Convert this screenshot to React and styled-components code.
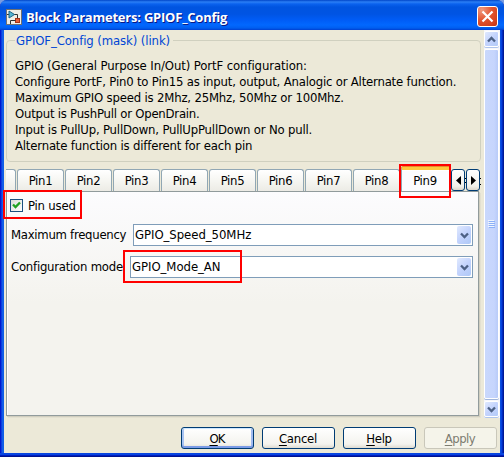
import React from 'react';
import styled, { createGlobalStyle } from 'styled-components';

const Global = createGlobalStyle`
  *, *::before, *::after { box-sizing: border-box; }
  body { margin: 0; background: #7a9ce0; overflow: hidden; }
`;

const Window = styled.div`
  position: relative;
  display: flex;
  flex-direction: column;
  width: 504px;
  height: 457px;
  padding: 0 4px 4px;
  border-radius: 7px 7px 0 0;
  background: linear-gradient(to right, #0019cf 0, #0019cf 1px, #0831d9 1px, #166aee 3px, #0855dd 4px, #0855dd 500px, #0a4be6 501px, #0037d8 502px, #001ea0 503px, #00138c 504px);
  font: 13px/16px 'DejaVu Sans Condensed', 'DejaVu Sans', sans-serif;
  color: #000;
  overflow: hidden;
  box-shadow: inset 0 -1px #00138c, inset 0 -2px #001dc0, inset 0 -4px #0845e0;
`;

const TitleBar = styled.header`
  display: flex;
  align-items: center;
  flex: none;
  height: 30px;
  margin: 0 -4px;
  padding: 3px 6px 0;
  background: linear-gradient(to bottom, #0045c8 0, #2b7ff5 2px, #0a62ee 4px, #0054e0 7px, #0054e3 14px, #005cf6 20px, #0268fe 25px, #005ef0 28px, #003fd0 30px);
`;

const Title = styled.h1`
  flex: 1;
  margin: 0 0 0 4px;
  font: bold 13px/18px 'Open Sans', sans-serif;
  letter-spacing: -0.22px;
  color: #fff;
  text-shadow: 1px 1px #0a1883;
`;

const CloseButton = styled.button`
  display: flex;
  align-items: center;
  justify-content: center;
  width: 21px;
  height: 21px;
  margin: 0;
  padding: 0;
  border: 1px solid #fff;
  border-radius: 3px;
  background: radial-gradient(circle at 20% 15%, #f09a80, #e25530 45%, #d3401c 80%, #b93210);
`;

const Body = styled.div`
  display: flex;
  flex: 1;
  flex-direction: column;
  background: #ece9d8;
`;

const ScrollRow = styled.div`
  display: flex;
  height: 388px;
`;

const Content = styled.div`
  width: 480px;
  padding: 2px 3px 0 2px;
`;

const Group = styled.fieldset`
  height: 130px;
  min-width: 0;
  margin: 0;
  padding: 10px 8px 0;
  border: 1px solid #d0d0bf;
  border-radius: 4px;
`;

const Legend = styled.legend`
  height: 16px;
  padding: 0 3px 0 1px;
  line-height: 18px;
  color: #0046d5;
  letter-spacing: -0.1px;
`;

const Line = styled.div`
  height: 16px;
  white-space: nowrap;
  letter-spacing: ${(p) => p.$tracking}px;
`;

const TabStrip = styled.div`
  display: flex;
  align-items: flex-end;
  height: 24px;
  margin-top: 5px;
`;

const Tab = styled.div`
  flex: none;
  width: 47px;
  height: 22px;
  margin-right: 1px;
  padding-top: 3px;
  border: 1px solid #91a7b4;
  border-bottom: 0;
  border-radius: 3px 3px 0 0;
  background: linear-gradient(#fff, #f6f6f2 50%, #ecebe5);
  text-align: center;
  letter-spacing: -0.3px;
`;

const PartialTab = styled(Tab)`
  width: 10px;
  border-left: 0;
  border-top-left-radius: 0;
`;

const SelectedTab = styled(Tab)`
  width: 50px;
  height: 24px;
  margin: 0;
  padding: 3px 2px 0 0;
  border-top: 3px solid #ffc73c;
  border-radius: 2px 2px 0 0;
  background: #fcfcfe;
  box-shadow: inset 0 1px #fff, 0 -1px #e68b2c;
`;

const TabArrow = styled.button`
  display: flex;
  flex: none;
  align-items: center;
  justify-content: center;
  width: 14px;
  height: 22px;
  margin: 0;
  padding: 0;
  border: 1px solid #003c74;
  border-radius: 3px;
  background: linear-gradient(#fff, #f2f1ea 80%, #dcd8cc);
`;

const TabSliver = styled.svg`
  flex: none;
  width: 1px;
  height: 22px;
`;

const Pane = styled.section`
  height: 225px;
  width: 473px;
  padding: 7px 5px 0 3px;
  border: 1px solid #919b9c;
  background: linear-gradient(#fcfcfe, #f4f3ee 50%, #f4f3ee);
  box-shadow: inset 1px 0 #fff, 1px 1px #d0cebf, 2px 2px #e3e0d0;
`;

const CheckRow = styled.label`
  display: flex;
  align-items: center;
  height: 13px;
  gap: 5px;
  letter-spacing: -0.2px;
`;

const CheckBox = styled.span`
  display: flex;
  width: 13px;
  height: 13px;
  border: 1px solid #1c5180;
  background: linear-gradient(135deg, #dcdcd7, #fff);
`;

const Field = styled.div`
  display: flex;
  align-items: center;
  height: 22px;
  margin-top: ${(p) => p.$gap}px;
  padding-left: 1px;
  letter-spacing: ${(p) => p.$tracking}px;
`;

const FieldLabel = styled.span`
  width: ${(p) => p.$width}px;
  white-space: nowrap;
`;

const Combo = styled.div`
  display: flex;
  flex: 1;
  align-items: center;
  justify-content: space-between;
  height: 22px;
  padding: 0 1px;
  border: 1px solid #7f9db9;
  background: #fff;
  letter-spacing: -0.05px;
`;

const DropButton = styled.span`
  display: flex;
  align-items: center;
  justify-content: center;
  width: 14px;
  height: 18px;
  border-radius: 2px;
  background: linear-gradient(135deg, #e1eafe, #c3d3fd 50%, #aec8f7);
`;

const ScrollBar = styled.div`
  display: flex;
  flex-direction: column;
  gap: 2px;
  width: 16px;
  padding: 1px 0 0;
  background: #f7f7fb;
`;

const ScrollArrow = styled.span`
  display: flex;
  flex: none;
  align-items: center;
  justify-content: center;
  width: 15px;
  height: 16px;
  border: 1px solid #fff;
  border-radius: 2px;
  background: linear-gradient(135deg, #e1eafe, #c3d3fd 50%, #b4cbf8);
  box-shadow: 0 1px #b0c5ec;
`;

const Thumb = styled.span`
  display: flex;
  align-items: center;
  justify-content: center;
  width: 15px;
  height: 350px;
  border: 1px solid #fff;
  border-radius: 2px;
  background: linear-gradient(to right, #c9d8fc, #c6d5fd 70%, #b8cbf8);
  box-shadow: 0 1px #a0b5dc;
`;

const Footer = styled.footer`
  display: flex;
  justify-content: flex-end;
  gap: 8px;
  padding: 9px 3px 0 0;
`;

const Button = styled.button`
  width: 73px;
  height: 22px;
  padding: 1px 1px 0 0;
  border: 1px solid #003c74;
  border-radius: 3px;
  background: linear-gradient(#fff, #f4f3ee 80%, #dfdbd0);
  font: inherit;
  letter-spacing: ${(p) => p.$tracking}px;
  color: #000;
`;

const DefaultButton = styled(Button)`
  box-shadow: inset 0 1px #cee7ff, inset 0 -2px #7b9be6, inset 2px 0 #a9c4f2, inset -2px 0 #a0bbf0;
`;

const DisabledButton = styled(Button)`
  border-color: #c9c7ba;
  background: #f5f4ea;
  color: #7d7c70;
`;

const Key = styled.span`
  text-decoration: underline;
  text-underline-offset: 2px;
  text-decoration-thickness: 1px;
`;

const Highlight = styled.div`
  position: absolute;
  left: ${(p) => p.$x}px;
  top: ${(p) => p.$y}px;
  width: ${(p) => p.$w}px;
  height: ${(p) => p.$h}px;
  border: 2px solid #f00;
  pointer-events: none;
`;

const Chevron = ({ up }) => (
  <svg width="9" height="7" viewBox="0 0 9 7">
    <path d={up ? 'M1 5.5 4.5 2 8 5.5' : 'M1 1.5 4.5 5 8 1.5'} fill="none" stroke="#4d6185" strokeWidth="2.3" />
  </svg>
);

const ModelIcon = () => (
  <svg width="16" height="16" viewBox="0 0 16 16">
    <rect width="16" height="16" fill="#707070" />
    <rect x="1" y="1" width="14" height="14" fill="#f1eee6" />
    <path d="M1 5.5h2M8 5.5h3.5v4" stroke="#333" fill="none" />
    <path d="M3 2v7l5.5-3.5z" fill="#58b4d0" stroke="#1a6488" />
    <rect x="9.5" y="9.5" width="4" height="4" fill="#e8603a" stroke="#a8341a" />
    <path d="M9.5 11.5h-5V15" stroke="#333" fill="none" />
  </svg>
);

const description = [
  ['GPIO (General Purpose In/Out) PortF configuration:', -0.1],
  ['Configure PortF, Pin0 to Pin15 as input, output, Analogic or Alternate function.', -0.195],
  ['Maximum GPIO speed is 2Mhz, 25Mhz, 50Mhz or 100Mhz.', -0.18],
  ['Output is PushPull or OpenDrain.', -0.23],
  ['Input is PullUp, PullDown, PullUpPullDown or No pull.', -0.19],
  ['Alternate function is different for each pin', -0.19],
];

const tabs = ['Pin1', 'Pin2', 'Pin3', 'Pin4', 'Pin5', 'Pin6', 'Pin7', 'Pin8'];

export default function App() {
  return (
    <Window>
      <Global />
      <TitleBar>
        <ModelIcon />
        <Title>Block Parameters: GPIOF_Config</Title>
        <CloseButton aria-label="Close">
          <svg width="13" height="13" viewBox="0 0 13 13">
            <path d="M1.5 1.5l10 10M11.5 1.5l-10 10" stroke="#fff" strokeWidth="2.2" />
          </svg>
        </CloseButton>
      </TitleBar>
      <Body>
        <ScrollRow>
          <Content>
            <Group>
              <Legend>GPIOF_Config (mask) (link)</Legend>
              {description.map(([text, tracking]) => (
                <Line key={text} $tracking={tracking}>{text}</Line>
              ))}
            </Group>
            <TabStrip>
              <PartialTab />
              {tabs.map((name) => <Tab key={name}>{name}</Tab>)}
              <SelectedTab>Pin9</SelectedTab>
              <TabArrow aria-label="Previous tabs">
                <svg width="5" height="9" viewBox="0 0 5 9"><path d="M5 0v9L0 4.5z" /></svg>
              </TabArrow>
              <TabSliver viewBox="0 0 1 22"><path d="M0 9h1v1H0zM0 13h1v1H0z" /></TabSliver>
              <TabArrow aria-label="Next tabs">
                <svg width="5" height="9" viewBox="0 0 5 9"><path d="M0 0v9l5-4.5z" /></svg>
              </TabArrow>
              <TabSliver viewBox="0 0 1 22"><path d="M0 9h1v1H0zM0 15h1v1H0z" /></TabSliver>
            </TabStrip>
            <Pane>
              <CheckRow>
                <CheckBox>
                  <svg width="11" height="11" viewBox="0 0 11 11">
                    <path d="M2 4.5 4.5 7 9 2.5" fill="none" stroke="#21a121" strokeWidth="2.3" />
                  </svg>
                </CheckBox>
                Pin used
              </CheckRow>
              <Field $gap={12} $tracking={-0.28}>
                <FieldLabel $width={122}>Maximum frequency</FieldLabel>
                <Combo>GPIO_Speed_50MHz<DropButton><Chevron /></DropButton></Combo>
              </Field>
              <Field $gap={10} $tracking={-0.24}>
                <FieldLabel $width={119}>Configuration mode</FieldLabel>
                <Combo>GPIO_Mode_AN<DropButton><Chevron /></DropButton></Combo>
              </Field>
            </Pane>
          </Content>
          <ScrollBar>
            <ScrollArrow><Chevron up /></ScrollArrow>
            <Thumb>
              <svg width="7" height="8" viewBox="0 0 7 8" shapeRendering="crispEdges">
                <path d="M0 .5h6M0 2.5h6M0 4.5h6M0 6.5h6" stroke="#eef4fe" />
                <path d="M1 1.5h6M1 3.5h6M1 5.5h6M1 7.5h6" stroke="#8cb0f8" />
              </svg>
            </Thumb>
            <ScrollArrow><Chevron /></ScrollArrow>
          </ScrollBar>
        </ScrollRow>
        <Footer>
          <DefaultButton $tracking={-0.9}><Key>O</Key>K</DefaultButton>
          <Button $tracking={-0.25}><Key>C</Key>ancel</Button>
          <Button $tracking={-0.3}><Key>H</Key>elp</Button>
          <DisabledButton disabled $tracking={-0.5}><Key>A</Key>pply</DisabledButton>
        </Footer>
      </Body>
      <Highlight $x={399} $y={164} $w={52} $h={34} />
      <Highlight $x={3} $y={190} $w={79} $h={29} />
      <Highlight $x={123} $y={250} $w={119} $h={33} />
    </Window>
  );
}
